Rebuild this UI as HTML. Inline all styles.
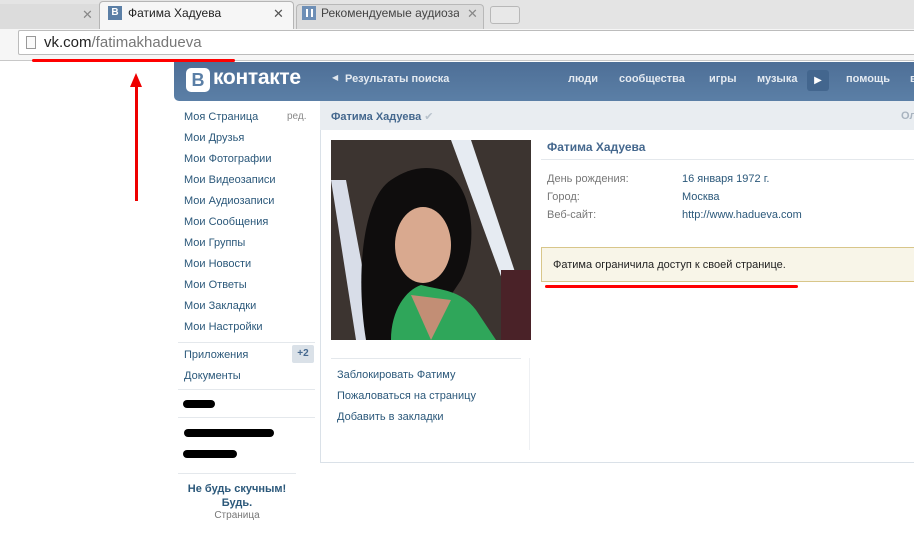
<!DOCTYPE html>
<html><head><meta charset="utf-8"><style>
*{margin:0;padding:0;box-sizing:border-box}
body{width:914px;height:537px;overflow:hidden;background:#fff;font-family:"Liberation Sans","DejaVu Sans",sans-serif;font-size:11px;position:relative}
.a{position:absolute;white-space:nowrap}
.menu div{position:absolute;left:184px;color:#2b587a;font-size:11px}
.lnk{color:#2b587a}
</style></head><body>
<!-- tab strip -->
<div class="a" style="left:0;top:0;width:914px;height:29px;background:#e4e4e4"></div>
<div class="a" style="left:0;top:4px;width:100px;height:25px;background:#dcdcdc;border-right:1px solid #b8b8b8"></div>
<div class="a" style="left:82px;top:7px;color:#888;font-size:13px">✕</div>
<div class="a" style="left:99px;top:1px;width:195px;height:28px;background:#f6f6f6;border:1px solid #b5b5b5;border-bottom:none;border-radius:4px 4px 0 0"></div>
<div class="a" style="left:108px;top:6px;width:14px;height:14px;background:#5b7fa6;color:#fff;font-weight:bold;font-size:10px;text-align:center;line-height:14px">B</div>
<div class="a" style="left:128px;top:6px;font-size:12px;color:#222">Фатима Хадуева</div>
<div class="a" style="left:273px;top:6px;font-size:13px;color:#555">✕</div>
<div class="a" style="left:296px;top:4px;width:188px;height:25px;background:#dcdcdc;border:1px solid #b8b8b8;border-bottom:none;border-radius:4px 4px 0 0"></div>
<div class="a" style="left:302px;top:6px;width:14px;height:14px;background:#6e8fb6"></div>
<div class="a" style="left:306px;top:9px;width:2px;height:8px;background:#fff"></div><div class="a" style="left:311px;top:9px;width:2px;height:8px;background:#fff"></div>
<div class="a" style="left:321px;top:6px;font-size:12px;color:#444;width:138px;overflow:hidden">Рекомендуемые аудиоза</div>
<div class="a" style="left:467px;top:6px;font-size:13px;color:#888">✕</div>
<div class="a" style="left:490px;top:6px;width:30px;height:18px;background:#e8e8e8;border:1px solid #b8b8b8;border-radius:3px"></div>
<!-- address bar -->
<div class="a" style="left:0;top:29px;width:914px;height:32px;background:#f6f6f6;border-bottom:1px solid #c8c8c8"></div>
<div class="a" style="left:18px;top:30px;width:900px;height:25px;background:#fff;border:1px solid #bcbcbc;border-radius:2px"></div>
<div class="a" style="left:26px;top:36px;width:10px;height:13px;border:1px solid #999;background:#fafafa"></div>
<div class="a" style="left:44px;top:34px;font-size:15px;color:#222">vk.com<span style="color:#777">/fatimakhadueva</span></div>
<div class="a" style="left:32px;top:59px;width:203px;height:3px;background:#f00;border-radius:2px"></div>
<!-- arrow -->
<div class="a" style="left:135px;top:84px;width:3px;height:117px;background:#e00"></div>
<div class="a" style="left:130px;top:73px;width:0;height:0;border-left:6px solid transparent;border-right:6px solid transparent;border-bottom:14px solid #e00"></div>
<!-- vk header -->
<div class="a" style="left:174px;top:62px;width:740px;height:39px;background:linear-gradient(#4e6f97,#5b7fa6);border-radius:0 0 0 5px"></div>
<div class="a" style="left:186px;top:68px;width:24px;height:24px;background:#fff;border-radius:5px;color:#5b7fa6;font-weight:bold;font-size:18px;text-align:center;line-height:24px">B</div>
<div class="a" style="left:213px;top:66px;color:#fff;font-weight:bold;font-size:21px;letter-spacing:-0.3px">контакте</div>
<div class="a" style="left:332px;top:73px;color:#dfe6ee;font-size:8px">◀</div>
<div class="a" style="left:345px;top:73px;color:#e4eaf1;font-weight:bold;font-size:11px">Результаты поиска</div>
<div class="a" style="left:568px;top:73px;color:#e4eaf1;font-weight:bold;font-size:11px">люди</div>
<div class="a" style="left:619px;top:73px;color:#e4eaf1;font-weight:bold;font-size:11px">сообщества</div>
<div class="a" style="left:709px;top:73px;color:#e4eaf1;font-weight:bold;font-size:11px">игры</div>
<div class="a" style="left:757px;top:73px;color:#e4eaf1;font-weight:bold;font-size:11px">музыка</div>
<div class="a" style="left:807px;top:70px;width:22px;height:21px;background:#43668e;border-radius:3px;color:#fff;font-size:10px;text-align:center;line-height:21px">▶</div>
<div class="a" style="left:846px;top:73px;color:#e4eaf1;font-weight:bold;font-size:11px">помощь</div>
<div class="a" style="left:910px;top:73px;color:#e4eaf1;font-weight:bold;font-size:11px">в</div>
<!-- left menu -->
<div class="menu">
<div style="top:111px">Моя Страница</div>
<div style="top:132px">Мои Друзья</div>
<div style="top:153px">Мои Фотографии</div>
<div style="top:174px">Мои Видеозаписи</div>
<div style="top:195px">Мои Аудиозаписи</div>
<div style="top:216px">Мои Сообщения</div>
<div style="top:237px">Мои Группы</div>
<div style="top:258px">Мои Новости</div>
<div style="top:279px">Мои Ответы</div>
<div style="top:300px">Мои Закладки</div>
<div style="top:321px">Мои Настройки</div>
<div style="top:349px">Приложения</div>
<div style="top:370px">Документы</div>
</div>
<div class="a" style="left:287px;top:111px;color:#888;font-size:10px">ред.</div>
<div class="a" style="left:178px;top:342px;width:137px;height:1px;background:#e4e8ec"></div>
<div class="a" style="left:292px;top:345px;width:22px;height:18px;background:#dae1e8;border-radius:2px;color:#45688e;font-weight:bold;font-size:10px;text-align:center;line-height:18px">+2</div>
<div class="a" style="left:178px;top:389px;width:137px;height:1px;background:#e4e8ec"></div>
<div class="a" style="left:183px;top:400px;width:32px;height:8px;background:#000;border-radius:4px"></div>
<div class="a" style="left:178px;top:417px;width:137px;height:1px;background:#e4e8ec"></div>
<div class="a" style="left:184px;top:429px;width:90px;height:8px;background:#000;border-radius:4px"></div>
<div class="a" style="left:183px;top:450px;width:54px;height:8px;background:#000;border-radius:4px"></div>
<div class="a" style="left:178px;top:473px;width:118px;height:1px;background:#e4e8ec"></div>
<div class="a" style="left:178px;top:482px;width:118px;text-align:center;color:#2b587a;font-weight:bold;font-size:11px;line-height:14px;white-space:normal">Не будь скучным!<br>Будь.</div>
<div class="a" style="left:178px;top:510px;width:118px;text-align:center;color:#777;font-size:10px">Страница</div>
<!-- content -->
<div class="a" style="left:320px;top:101px;width:600px;height:362px;border:1px solid #dae1e8;border-top:none"></div>
<div class="a" style="left:320px;top:101px;width:594px;height:29px;background:#e9edf1"></div>
<div class="a" style="left:331px;top:110px;color:#45688e;font-weight:bold;font-size:11px">Фатима Хадуева <span style="color:#b8c2cc">✔</span></div>
<div class="a" style="left:901px;top:110px;color:#a8b3bf;font-weight:bold;font-size:11px">Ол</div>
<!-- photo -->
<svg class="a" style="left:331px;top:140px" width="200" height="200" viewBox="0 0 200 200">
<rect width="200" height="200" fill="#2a2420"/>
<rect x="0" y="0" width="200" height="200" fill="#3c3430"/>
<polygon points="0,40 15,40 45,200 25,200" fill="#d8dde8"/>
<polygon points="120,0 140,0 190,150 175,150" fill="#e6ebf2"/>
<rect x="170" y="130" width="30" height="70" fill="#4a2228"/>
<path d="M60,40 C30,60 25,140 35,200 L90,200 L130,140 C150,100 140,40 110,30 C90,25 75,30 60,40Z" fill="#0f0d0d"/>
<ellipse cx="92" cy="105" rx="28" ry="38" fill="#d9a98f"/>
<path d="M60,200 C60,170 75,150 90,145 C110,150 130,150 145,170 L165,200Z" fill="#2fa65a"/>
<path d="M80,155 L100,200 L120,160Z" fill="#c28e75"/>
</svg>
<div class="a" style="left:331px;top:358px;width:190px;height:1px;background:#e4e8ec"></div>
<div class="a" style="left:529px;top:358px;width:1px;height:92px;background:#eef0f3"></div>
<div class="a lnk" style="left:337px;top:369px">Заблокировать Фатиму</div>
<div class="a lnk" style="left:337px;top:390px">Пожаловаться на страницу</div>
<div class="a lnk" style="left:337px;top:411px">Добавить в закладки</div>
<div class="a" style="left:547px;top:140px;color:#45688e;font-weight:bold;font-size:12px">Фатима Хадуева</div>
<div class="a" style="left:541px;top:159px;width:373px;height:1px;background:#e4e8ec"></div>
<div class="a" style="left:547px;top:173px;color:#777">День рождения:</div>
<div class="a lnk" style="left:682px;top:173px">16 января 1972 г.</div>
<div class="a" style="left:547px;top:191px;color:#777">Город:</div>
<div class="a lnk" style="left:682px;top:191px">Москва</div>
<div class="a" style="left:547px;top:209px;color:#777">Веб-сайт:</div>
<div class="a lnk" style="left:682px;top:209px">http://www.hadueva.com</div>
<div class="a" style="left:541px;top:247px;width:380px;height:35px;background:#f8f5e8;border:1px solid #d8c68a"></div>
<div class="a" style="left:553px;top:259px;color:#222">Фатима ограничила доступ к своей странице.</div>
<div class="a" style="left:545px;top:285px;width:253px;height:3px;background:#f00;border-radius:2px"></div>
</body></html>
